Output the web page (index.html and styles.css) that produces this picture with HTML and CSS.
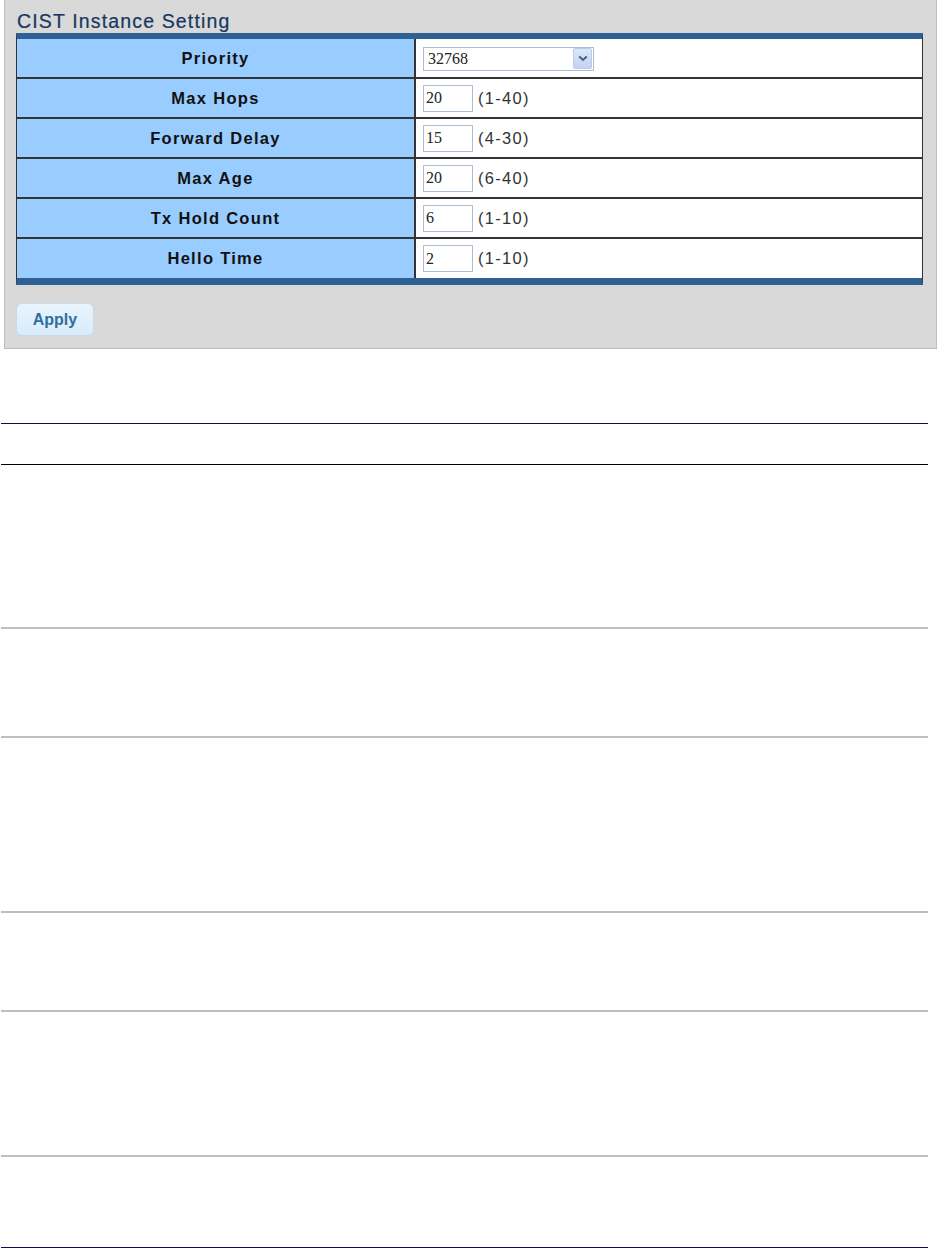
FILE: index.html
```html
<!DOCTYPE html>
<html>
<head>
<meta charset="utf-8">
<title>CIST Instance Setting</title>
<link rel="stylesheet" href="styles.css">
</head>
<body>
<div class="panel">
  <div class="panel-title">CIST Instance Setting</div>
  <div class="cist-table">
    <div class="row row-first">
      <div class="label">Priority</div>
      <div class="value">
        <div class="select">
          <span class="select-text">32768</span>
          <span class="select-btn">
            <svg width="10" height="7" viewBox="0 0 10 7"><path d="M1.2 1.5 L5 5 L8.8 1.5" fill="none" stroke="#4a5f86" stroke-width="2"/></svg>
          </span>
        </div>
      </div>
    </div>
    <div class="row">
      <div class="label">Max Hops</div>
      <div class="value"><input class="num" type="text" value="20"><span class="range">(1-40)</span></div>
    </div>
    <div class="row">
      <div class="label">Forward Delay</div>
      <div class="value"><input class="num" type="text" value="15"><span class="range">(4-30)</span></div>
    </div>
    <div class="row">
      <div class="label">Max Age</div>
      <div class="value"><input class="num" type="text" value="20"><span class="range">(6-40)</span></div>
    </div>
    <div class="row">
      <div class="label">Tx Hold Count</div>
      <div class="value"><input class="num" type="text" value="6"><span class="range">(1-10)</span></div>
    </div>
    <div class="row row-last">
      <div class="label">Hello Time</div>
      <div class="value"><input class="num" type="text" value="2"><span class="range">(1-10)</span></div>
    </div>
  </div>
  <button class="apply" type="button">Apply</button>
</div>

<div class="doc">
  <div class="doc-head"></div>
  <div class="doc-row r1"></div>
  <div class="doc-row r2"></div>
  <div class="doc-row r3"></div>
  <div class="doc-row r4"></div>
  <div class="doc-row r5"></div>
  <div class="doc-row r6"></div>
</div>
</body>
</html>
```

FILE: styles.css
```css
* { box-sizing: border-box; }

html, body {
  margin: 0;
  padding: 0;
  background: #ffffff;
}

body {
  font-family: "Liberation Sans", Arial, sans-serif;
  width: 937px;
}

.panel {
  margin-left: 4px;
  width: 933px;
  background: #d9d9d9;
  border: 1px solid #bdbdbd;
  border-top: 0;
  padding: 0 0 12px 11px;
}

.panel-title {
  padding-top: 11px;
  height: 33px;
  line-height: 20px;
  font-size: 19.5px;
  letter-spacing: 1.15px;
  color: #173760;
  padding-left: 1px;
  -webkit-text-stroke: 0.2px #173760;
}

.cist-table {
  width: 907px;
  border-top: 6px solid #2f6094;
  border-bottom: 7px solid #2f6094;
  border-left: 1px solid #333;
  border-right: 1px solid #333;
}

.row {
  display: flex;
  height: 40px;
  border-top: 2px solid #333;
}

.row-first {
  border-top: 0;
  height: 38px;
}

.row-last {
  height: 41px;
}

.label {
  width: 397px;
  background: #99ccff;
  border-right: 2px solid #333;
  box-sizing: content-box;
  display: flex;
  align-items: center;
  justify-content: center;
  font-weight: bold;
  font-size: 16.5px;
  letter-spacing: 1.3px;
  color: #111;
}

.value {
  flex: 1;
  background: #ffffff;
  display: flex;
  align-items: center;
  padding-left: 7px;
}

.select {
  width: 171px;
  height: 24px;
  border: 1px solid #a9bdd4;
  display: flex;
  align-items: center;
  justify-content: space-between;
  background: #fff;
  margin-top: 1px;
}

.select-text {
  font-family: "Liberation Serif", "Times New Roman", serif;
  font-size: 16px;
  color: #222;
  padding-left: 4px;
}

.select-btn {
  width: 19px;
  height: 21px;
  margin-right: 1px;
  background: linear-gradient(#dbe6f8, #c3d3f1);
  border: 1px solid #b9cbea;
  border-radius: 2px;
  display: flex;
  align-items: center;
  justify-content: center;
}

.num {
  width: 50px;
  height: 27px;
  border: 1px solid #a9bdd4;
  padding: 0 2px;
  margin: 0;
  font-family: "Liberation Serif", "Times New Roman", serif;
  font-size: 16px;
  color: #222;
  background: #fff;
  outline: none;
}

.range {
  margin-left: 5px;
  font-size: 16.5px;
  letter-spacing: 1.3px;
  color: #333;
}

.apply {
  display: block;
  margin-top: 18px;
  width: 78px;
  height: 33px;
  border: 1px solid #c5dbec;
  border-radius: 6px;
  background: linear-gradient(#e9f4fd, #d9ebfa);
  color: #2e6e9e;
  font-family: "Liberation Sans", Arial, sans-serif;
  font-weight: bold;
  font-size: 16px;
  padding: 0;
}

.doc {
  margin-top: 74px;
  margin-left: 1px;
  width: 927px;
}

.doc-head {
  height: 42px;
  border-top: 1px solid #0b0b5e;
  border-bottom: 1px solid #000;
}

.doc-row {
  border-bottom: 2px solid #bfbfbf;
}

.r1 { height: 164px; }
.r2 { height: 109px; }
.r3 { height: 175px; }
.r4 { height: 99px; }
.r5 { height: 145px; }
.r6 { height: 91px; border-bottom: 1px solid #0b0b5e; }
```
